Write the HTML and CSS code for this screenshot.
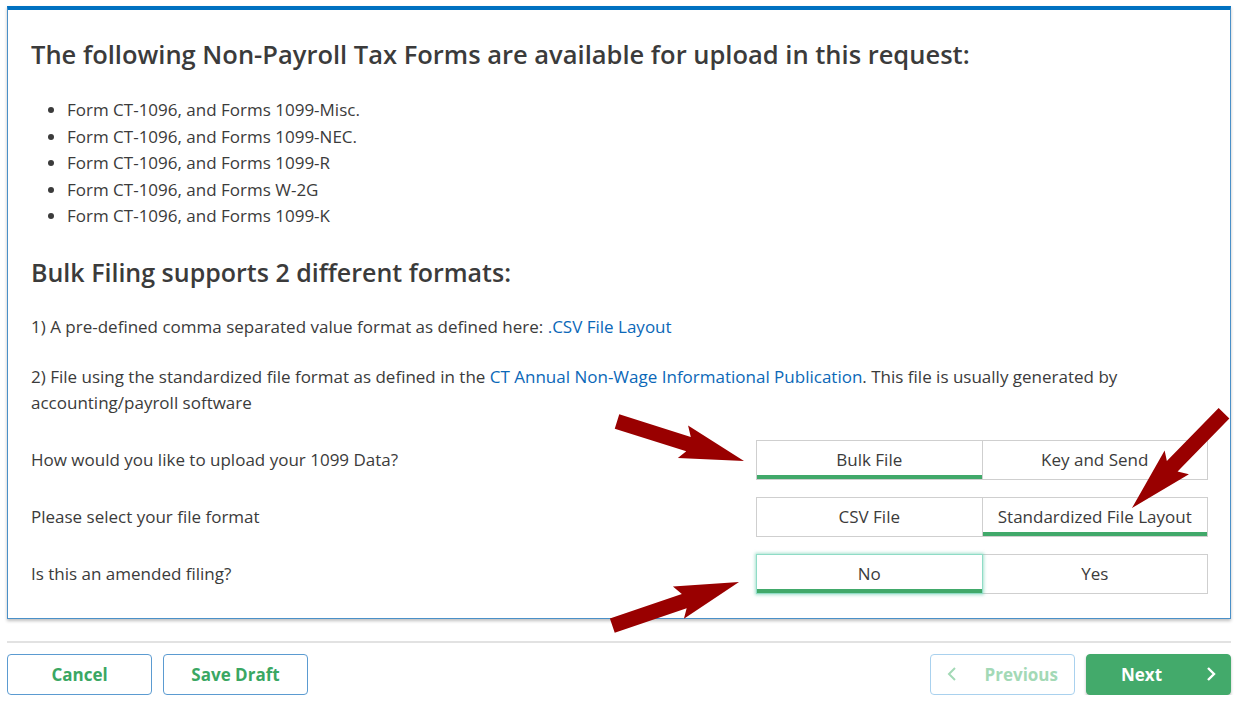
FILE: index.html
```html
<!DOCTYPE html>
<html lang="en">
<head>
    <meta charset="UTF-8">
    <title>Bulk Filing</title>
    <link rel="stylesheet" href="styles.css">
</head>
<body>
    <div class="page">
        <div class="card">
            <h1>The following Non-Payroll Tax Forms are available for upload in this request:</h1>
            <ul class="forms">
                <li>Form CT-1096, and Forms 1099-Misc.</li>
                <li>Form CT-1096, and Forms 1099-NEC.</li>
                <li>Form CT-1096, and Forms 1099-R</li>
                <li>Form CT-1096, and Forms W-2G</li>
                <li>Form CT-1096, and Forms 1099-K</li>
            </ul>
            <h2>Bulk Filing supports 2 different formats:</h2>
            <p>1) A pre-defined comma separated value format as defined here: <a href="#">.CSV File Layout</a></p>
            <p>2) File using the standardized file format as defined in the <a href="#">CT Annual Non-Wage Informational Publication</a>. This file is usually generated by accounting/payroll software</p>

            <div class="questions">
                <div class="row">
                    <span class="label">How would you like to upload your 1099 Data?</span>
                    <div class="segment">
                        <button class="seg selected">Bulk File</button>
                        <button class="seg">Key and Send</button>
                    </div>
                </div>
                <div class="row">
                    <span class="label">Please select your file format</span>
                    <div class="segment">
                        <button class="seg">CSV File</button>
                        <button class="seg selected">Standardized File Layout</button>
                    </div>
                </div>
                <div class="row">
                    <span class="label">Is this an amended filing?</span>
                    <div class="segment">
                        <button class="seg selected focused">No</button>
                        <button class="seg">Yes</button>
                    </div>
                </div>
            </div>
        </div>

        <div class="footer">
            <div class="group">
                <button class="btn outline">Cancel</button>
                <button class="btn outline">Save Draft</button>
            </div>
            <div class="group">
                <button class="btn outline disabled">
                    <svg class="chev left" width="10" height="16" viewBox="0 0 10 16"><path d="M8 2 L2 8 L8 14" fill="none" stroke="currentColor" stroke-width="2"/></svg>
                    <span>Previous</span>
                </button>
                <button class="btn primary">
                    <span>Next</span>
                    <svg class="chev right" width="10" height="16" viewBox="0 0 10 16"><path d="M2 2 L8 8 L2 14" fill="none" stroke="currentColor" stroke-width="2.4"/></svg>
                </button>
            </div>
        </div>
    </div>

    <!-- annotation arrows drawn over the screenshot -->
    <svg class="arrows" width="1239" height="703" viewBox="0 0 1239 703">
        <g transform="translate(744 461) rotate(17.5)">
            <polygon points="0,0 -64,-17 -58,-7 -133,-7 -133,8 -58,8 -64,17"/>
        </g>
        <g transform="translate(1132 508) rotate(134.4)">
            <polygon points="0,0 -64,-17 -58,-7 -132,-7 -132,8 -58,8 -64,17"/>
        </g>
        <g transform="translate(739 582) rotate(-18.8)">
            <polygon points="0,0 -64,-17 -58,-7 -134,-7 -134,8 -58,8 -64,17"/>
        </g>
    </svg>
</body>
</html>
```

FILE: styles.css
```css
body {
    margin: 0;
    font-family: "Open Sans", "Noto Sans", sans-serif;
    font-size: 17px;
    color: #3b3b3b;
    background-color: white;
}
.page {
    padding: 6px 8px 0 7px;
}
.card {
    border: 1px solid #4a90c8;
    border-top: 4px solid #0071c1;
    box-shadow: 0 2px 3px rgba(0, 0, 0, 0.25);
    padding: 0 22px 24px 23px;
}
h1 {
    font-size: 25.5px;
    font-weight: 600;
    line-height: 31px;
    margin: 29px 0 27px;
}
.forms {
    margin: 0 0 28px;
    padding-left: 36px;
    line-height: 26.5px;
}
h2 {
    font-size: 25px;
    font-weight: 600;
    line-height: 29px;
    margin: 0 0 27px;
}
p {
    margin: 0 0 24px;
    line-height: 26px;
}
a {
    color: #0b68b8;
    text-decoration: none;
}
.questions {
    display: flex;
    flex-direction: column;
    gap: 17px;
    margin-top: 21px;
}
.row {
    display: flex;
    justify-content: space-between;
    align-items: center;
}
.segment {
    display: flex;
    width: 452px;
}
.seg {
    flex: 1;
    height: 40px;
    font-family: inherit;
    font-size: 17px;
    color: #3b3b3b;
    background-color: white;
    border: 1px solid #cfcfcf;
    padding: 0;
    margin: 0;
}
.seg + .seg {
    border-left: none;
}
.seg.selected {
    box-shadow: inset 0 -4px 0 #41a96a;
}
.seg.focused {
    border: 1px solid #8fdcc6;
    box-shadow: inset 0 -4px 0 #41a96a, 0 0 3px 1px rgba(110, 205, 175, 0.6);
    position: relative;
}
.footer {
    border-top: 2px solid #e2e2e2;
    margin-top: 22px;
    padding-top: 11px;
    display: flex;
    justify-content: space-between;
}
.group {
    display: flex;
    gap: 11px;
}
.btn {
    width: 145px;
    height: 41px;
    border-radius: 4px;
    font-family: inherit;
    font-size: 17px;
    font-weight: 700;
    display: flex;
    align-items: center;
    justify-content: center;
    padding: 0 14px;
}
.outline {
    background-color: white;
    border: 1px solid #5b9bd1;
    color: #3aa763;
}
.outline.disabled {
    border-color: #a9d1ee;
    color: #a3d9b6;
    justify-content: space-between;
    padding-left: 16px;
}
.primary {
    background-color: #43aa6b;
    border: 1px solid #43aa6b;
    color: white;
    justify-content: space-between;
    padding: 0 14px 0 34px;
    box-shadow: 0 2px 3px rgba(0, 0, 0, 0.25);
}
.disabled span {
    margin-right: 2px;
}
.arrows {
    position: absolute;
    top: 0;
    left: 0;
    pointer-events: none;
    fill: #990000;
}
```
